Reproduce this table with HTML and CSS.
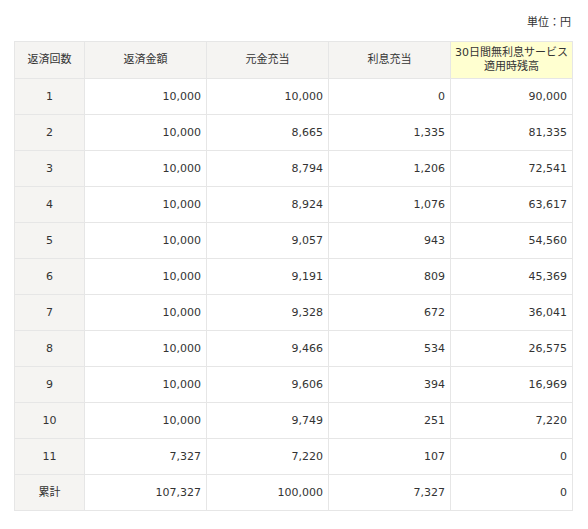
FILE: index.html
```html
<!DOCTYPE html>
<html lang="ja">
<head>
<meta charset="utf-8">
<link rel="stylesheet" href="styles.css">
</head>
<body>
<div class="wrap">
  <p class="unit">単位：円</p>
  <table class="sched">
    <thead>
      <tr>
        <th class="c-no">返済回数</th>
        <th>返済金額</th>
        <th>元金充当</th>
        <th>利息充当</th>
        <th class="hl">30日間無利息サービス<br>適用時残高</th>
      </tr>
    </thead>
    <tbody>
      <tr><th>1</th><td>10,000</td><td>10,000</td><td>0</td><td>90,000</td></tr>
      <tr><th>2</th><td>10,000</td><td>8,665</td><td>1,335</td><td>81,335</td></tr>
      <tr><th>3</th><td>10,000</td><td>8,794</td><td>1,206</td><td>72,541</td></tr>
      <tr><th>4</th><td>10,000</td><td>8,924</td><td>1,076</td><td>63,617</td></tr>
      <tr><th>5</th><td>10,000</td><td>9,057</td><td>943</td><td>54,560</td></tr>
      <tr><th>6</th><td>10,000</td><td>9,191</td><td>809</td><td>45,369</td></tr>
      <tr><th>7</th><td>10,000</td><td>9,328</td><td>672</td><td>36,041</td></tr>
      <tr><th>8</th><td>10,000</td><td>9,466</td><td>534</td><td>26,575</td></tr>
      <tr><th>9</th><td>10,000</td><td>9,606</td><td>394</td><td>16,969</td></tr>
      <tr><th>10</th><td>10,000</td><td>9,749</td><td>251</td><td>7,220</td></tr>
      <tr><th>11</th><td>7,327</td><td>7,220</td><td>107</td><td>0</td></tr>
      <tr><th>累計</th><td>107,327</td><td>100,000</td><td>7,327</td><td>0</td></tr>
    </tbody>
  </table>
</div>
</body>
</html>
```
FILE: styles.css
```css
html, body {
  margin: 0;
  padding: 0;
  background: #fff;
}
.wrap {
  width: 559px;
  margin-left: 14px;
  font-family: "DejaVu Sans", "Noto Sans CJK JP", sans-serif;
  font-size: 11px;
  color: #333;
}
.unit {
  margin: 15px 0 10px;
  padding-right: 2px;
  line-height: 16px;
  text-align: right;
}
.sched {
  width: 559px;
  border-collapse: collapse;
  table-layout: fixed;
}
.sched th,
.sched td {
  box-sizing: border-box;
  border: 1px solid #e6e6e6;
  padding: 0 5px;
  height: 36px;
  line-height: 14px;
  font-weight: normal;
}
.sched thead th {
  background: #f5f4f2;
  height: 37px;
  text-align: center;
}
.sched thead th.hl {
  background: #ffffd0;
  padding: 0;
  white-space: nowrap;
}
.sched tbody th {
  background: #f5f4f2;
  text-align: center;
}
.sched tbody td {
  text-align: right;
  background: #fff;
}
.sched .c-no { width: 70px; }
```
